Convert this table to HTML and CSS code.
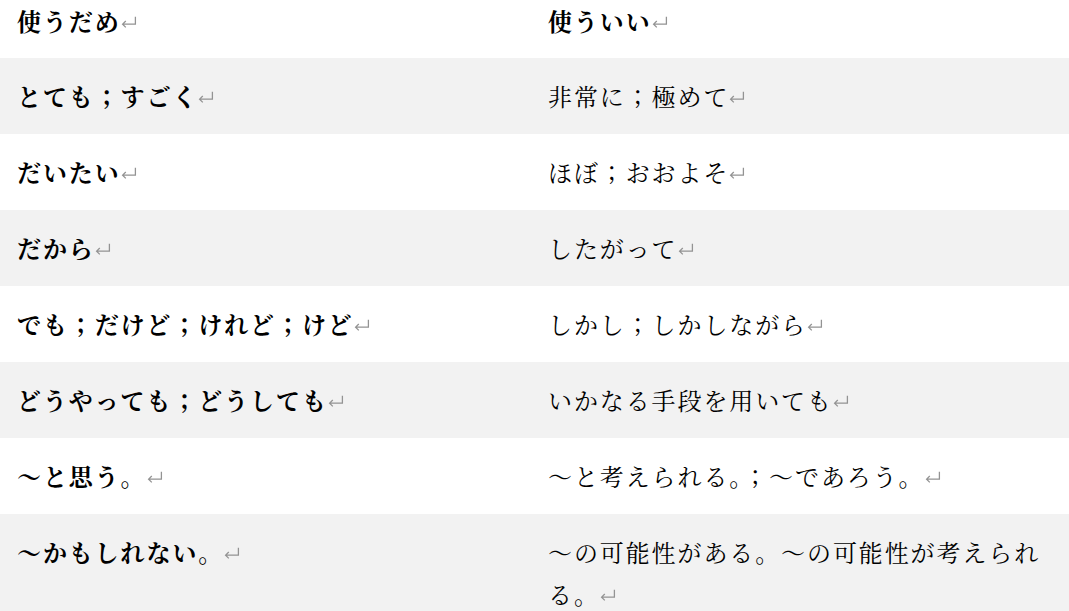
FILE: index.html
```html
<!DOCTYPE html>
<html lang="ja">
<head>
<meta charset="utf-8">
<title>言い換え表</title>
<link rel="stylesheet" href="styles.css">
</head>
<body>
<table class="words">
  <colgroup><col class="col-bad"><col class="col-good"></colgroup>
  <tr class="head">
    <td class="bad">使うだめ<svg class="ret" viewBox="0 0 15 11"><path d="M13.5 0.5V7.5H1.5M4.5 4.5L1.5 7.5L4.5 10.5"/></svg></td>
    <td class="good">使ういい<svg class="ret" viewBox="0 0 15 11"><path d="M13.5 0.5V7.5H1.5M4.5 4.5L1.5 7.5L4.5 10.5"/></svg></td>
  </tr>
  <tr class="alt">
    <td class="bad">とても；すごく<svg class="ret" viewBox="0 0 15 11"><path d="M13.5 0.5V7.5H1.5M4.5 4.5L1.5 7.5L4.5 10.5"/></svg></td>
    <td class="good">非常に；極めて<svg class="ret" viewBox="0 0 15 11"><path d="M13.5 0.5V7.5H1.5M4.5 4.5L1.5 7.5L4.5 10.5"/></svg></td>
  </tr>
  <tr>
    <td class="bad">だいたい<svg class="ret" viewBox="0 0 15 11"><path d="M13.5 0.5V7.5H1.5M4.5 4.5L1.5 7.5L4.5 10.5"/></svg></td>
    <td class="good">ほぼ；おおよそ<svg class="ret" viewBox="0 0 15 11"><path d="M13.5 0.5V7.5H1.5M4.5 4.5L1.5 7.5L4.5 10.5"/></svg></td>
  </tr>
  <tr class="alt">
    <td class="bad">だから<svg class="ret" viewBox="0 0 15 11"><path d="M13.5 0.5V7.5H1.5M4.5 4.5L1.5 7.5L4.5 10.5"/></svg></td>
    <td class="good">したがって<svg class="ret" viewBox="0 0 15 11"><path d="M13.5 0.5V7.5H1.5M4.5 4.5L1.5 7.5L4.5 10.5"/></svg></td>
  </tr>
  <tr>
    <td class="bad">でも；だけど；けれど；けど<svg class="ret" viewBox="0 0 15 11"><path d="M13.5 0.5V7.5H1.5M4.5 4.5L1.5 7.5L4.5 10.5"/></svg></td>
    <td class="good">しかし；しかしながら<svg class="ret" viewBox="0 0 15 11"><path d="M13.5 0.5V7.5H1.5M4.5 4.5L1.5 7.5L4.5 10.5"/></svg></td>
  </tr>
  <tr class="alt">
    <td class="bad">どうやっても；どうしても<svg class="ret" viewBox="0 0 15 11"><path d="M13.5 0.5V7.5H1.5M4.5 4.5L1.5 7.5L4.5 10.5"/></svg></td>
    <td class="good">いかなる手段を用いても<svg class="ret" viewBox="0 0 15 11"><path d="M13.5 0.5V7.5H1.5M4.5 4.5L1.5 7.5L4.5 10.5"/></svg></td>
  </tr>
  <tr>
    <td class="bad">〜と思う。<svg class="ret" viewBox="0 0 15 11"><path d="M13.5 0.5V7.5H1.5M4.5 4.5L1.5 7.5L4.5 10.5"/></svg></td>
    <td class="good">〜と考えられる。；〜であろう。<svg class="ret" viewBox="0 0 15 11"><path d="M13.5 0.5V7.5H1.5M4.5 4.5L1.5 7.5L4.5 10.5"/></svg></td>
  </tr>
  <tr class="alt">
    <td class="bad">〜かもしれない。<svg class="ret" viewBox="0 0 15 11"><path d="M13.5 0.5V7.5H1.5M4.5 4.5L1.5 7.5L4.5 10.5"/></svg></td>
    <td class="good">〜の可能性がある。〜の可能性が考えられる。<svg class="ret" viewBox="0 0 15 11"><path d="M13.5 0.5V7.5H1.5M4.5 4.5L1.5 7.5L4.5 10.5"/></svg></td>
  </tr>
</table>
</body>
</html>
```

FILE: styles.css
```css
html, body {
  margin: 0;
  padding: 0;
  background: #ffffff;
}

body {
  font-family: "Noto Serif CJK JP", "Liberation Serif", "Noto Sans CJK JP", serif;
  color: #000000;
  overflow: hidden;
}

.words {
  border-collapse: collapse;
  border-spacing: 0;
  width: 1069px;
  table-layout: fixed;
}

.col-bad {
  width: 531px;
}

.col-good {
  width: 538px;
}

.words td {
  padding: 17px 17px 17px 17px;
  font-size: 24px;
  line-height: 42px;
  letter-spacing: 1.9px;
  vertical-align: top;
  white-space: normal;
  word-break: break-all;
}

.words tr.head td {
  padding-top: 0;
  padding-bottom: 16px;
  font-weight: bold;
}

.words tr.alt td {
  background: #f2f2f2;
}

.bad {
  font-weight: bold;
}

.good {
  font-weight: normal;
}

.ret {
  display: inline-block;
  width: 16px;
  height: 12px;
  margin-left: 0;
  vertical-align: 3px;
  fill: none;
  stroke: #939393;
  stroke-width: 1.2;
}
```
